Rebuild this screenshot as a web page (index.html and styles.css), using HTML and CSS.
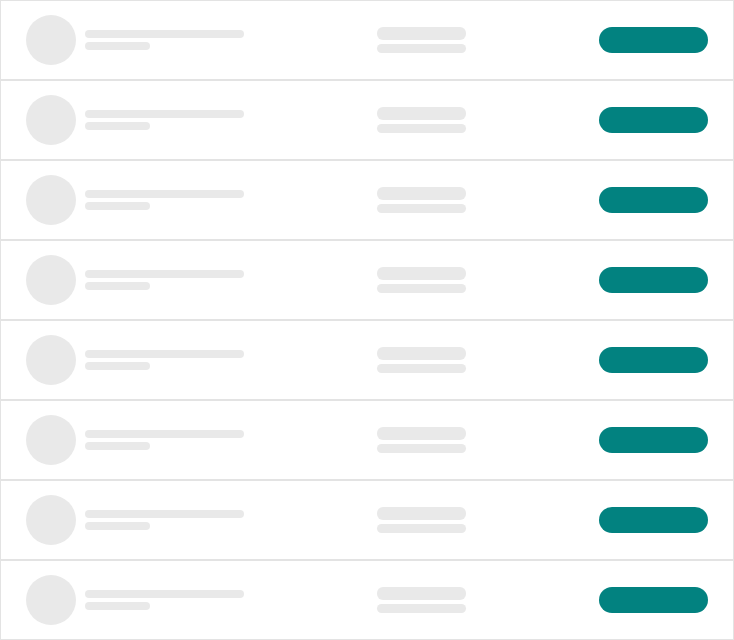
FILE: index.html
```html
<!DOCTYPE html>
<html lang="en">
<head>
<meta charset="utf-8">
<title>Skeleton list</title>
<link rel="stylesheet" href="styles.css">
</head>
<body>
<ul class="list">
  <li class="row"><div class="who"><span class="avatar"></span><div class="lines"><span class="l1"></span><span class="l2"></span></div></div><div class="mid"><span class="m1"></span><span class="m2"></span></div><span class="btn"></span></li>
  <li class="row"><div class="who"><span class="avatar"></span><div class="lines"><span class="l1"></span><span class="l2"></span></div></div><div class="mid"><span class="m1"></span><span class="m2"></span></div><span class="btn"></span></li>
  <li class="row"><div class="who"><span class="avatar"></span><div class="lines"><span class="l1"></span><span class="l2"></span></div></div><div class="mid"><span class="m1"></span><span class="m2"></span></div><span class="btn"></span></li>
  <li class="row"><div class="who"><span class="avatar"></span><div class="lines"><span class="l1"></span><span class="l2"></span></div></div><div class="mid"><span class="m1"></span><span class="m2"></span></div><span class="btn"></span></li>
  <li class="row"><div class="who"><span class="avatar"></span><div class="lines"><span class="l1"></span><span class="l2"></span></div></div><div class="mid"><span class="m1"></span><span class="m2"></span></div><span class="btn"></span></li>
  <li class="row"><div class="who"><span class="avatar"></span><div class="lines"><span class="l1"></span><span class="l2"></span></div></div><div class="mid"><span class="m1"></span><span class="m2"></span></div><span class="btn"></span></li>
  <li class="row"><div class="who"><span class="avatar"></span><div class="lines"><span class="l1"></span><span class="l2"></span></div></div><div class="mid"><span class="m1"></span><span class="m2"></span></div><span class="btn"></span></li>
  <li class="row"><div class="who"><span class="avatar"></span><div class="lines"><span class="l1"></span><span class="l2"></span></div></div><div class="mid"><span class="m1"></span><span class="m2"></span></div><span class="btn"></span></li>
</ul>
</body>
</html>
```
FILE: styles.css
```css
html, body {
  margin: 0;
  padding: 0;
  background: #ffffff;
  font-family: "Liberation Sans", Arial, sans-serif;
}
.list {
  list-style: none;
  margin: 0;
  padding: 0;
  width: 734px;
}
.row {
  box-sizing: border-box;
  height: 80px;
  border: 1px solid #e3e3e3;
  padding: 0 25px;
  display: flex;
  align-items: center;
  justify-content: space-between;
}
.who {
  display: flex;
  align-items: center;
  gap: 9px;
}
.avatar {
  width: 50px;
  height: 50px;
  border-radius: 50%;
  background: #e9e9e9;
}
.lines {
  display: flex;
  flex-direction: column;
  gap: 4px;
}
.l1, .l2, .m1, .m2 {
  display: block;
  background: #e9e9e9;
  border-radius: 6px;
}
.l1 { width: 159px; height: 8px; }
.l2 { width: 65px; height: 8px; }
.mid {
  display: flex;
  flex-direction: column;
  gap: 4px;
}
.m1 { width: 89px; height: 13px; }
.m2 { width: 89px; height: 9px; }
.btn {
  display: block;
  width: 109px;
  height: 26px;
  border-radius: 13px;
  background: #028280;
}
```
